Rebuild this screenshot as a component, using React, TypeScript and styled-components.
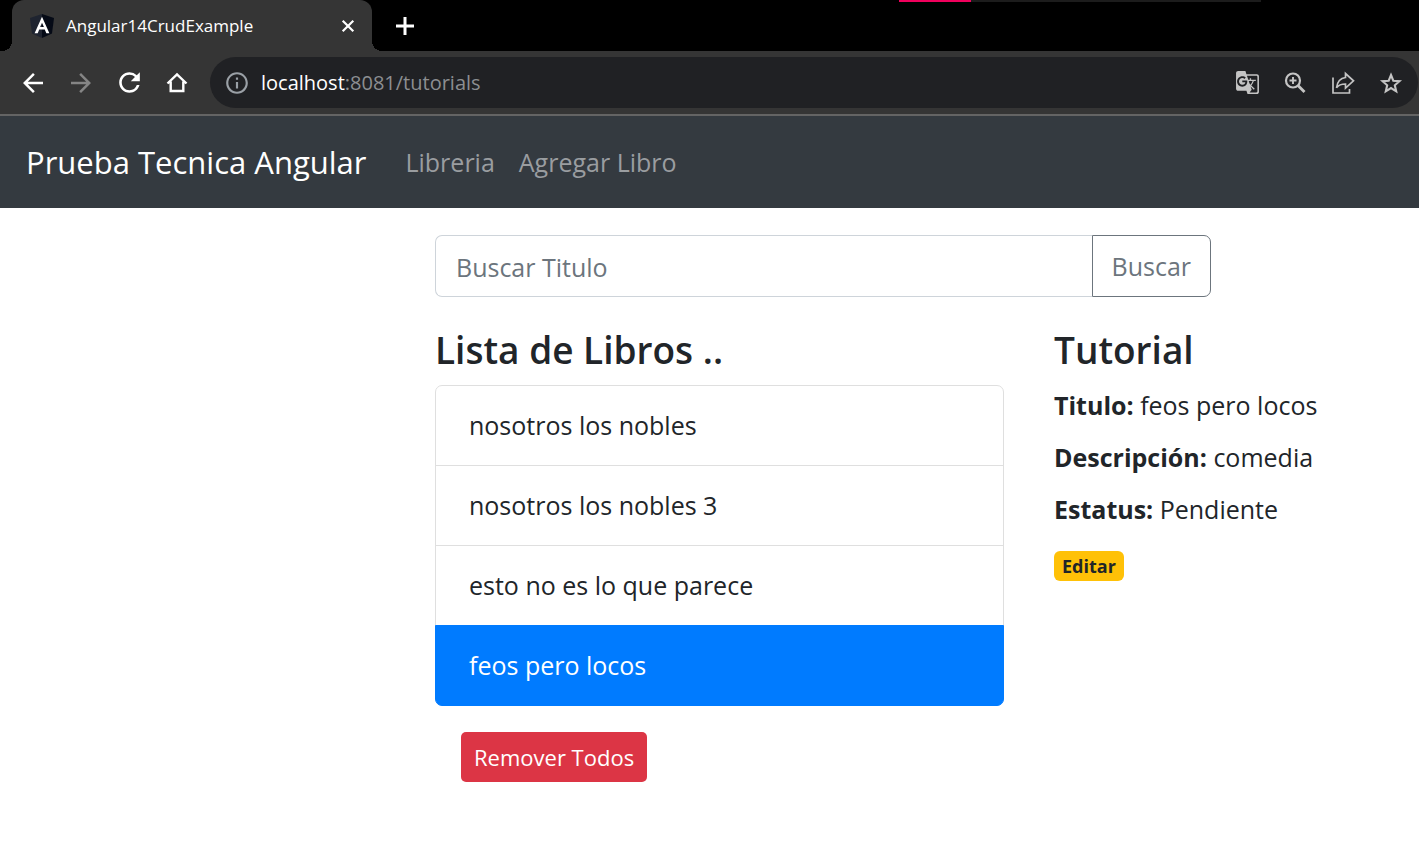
import React from "react";
import styled, { createGlobalStyle } from "styled-components";
import {
  MdArrowBack,
  MdArrowForward,
  MdGTranslate,
  MdInfoOutline,
  MdRefresh,
} from "react-icons/md";

const GlobalStyle = createGlobalStyle`
  *, *::before, *::after { box-sizing: border-box; }
  body {
    margin: 0;
    background: #fff;
    color: #212529;
    font-family: "Open Sans", "Noto Sans", sans-serif;
    font-size: 25px;
    line-height: 40px;
  }
  button, input { font: inherit; }
`;

const TabStrip = styled.div`
  position: relative;
  display: flex;
  align-items: center;
  height: 51px;
  padding-left: 12px;
  background: #000;
`;

const Tab = styled.div`
  position: relative;
  display: flex;
  align-items: center;
  gap: 12px;
  width: 360px;
  height: 51px;
  padding: 0 14px 0 18px;
  border-radius: 12px 12px 0 0;
  background: #353535;
  color: #fff;
  font-size: 17px;
  line-height: 24px;

  &::before,
  &::after {
    content: "";
    position: absolute;
    bottom: 0;
    width: 10px;
    height: 10px;
  }
  &::before {
    right: 100%;
    background: radial-gradient(circle at 0 0, transparent 10px, #353535 10px);
  }
  &::after {
    left: 100%;
    background: radial-gradient(circle at 100% 0, transparent 10px, #353535 10px);
  }
`;

const TabTitle = styled.span`
  flex: 1;
`;

const IconButton = styled.button<{ $color?: string; $size?: number }>`
  display: grid;
  flex: none;
  place-items: center;
  width: ${(p) => p.$size ?? 48}px;
  height: ${(p) => p.$size ?? 48}px;
  padding: 0;
  border: 0;
  background: none;
  color: ${(p) => p.$color ?? "#fff"};
`;

const NewTab = styled.div`
  margin-left: 9px;
`;

const LoadTrack = styled.div`
  position: absolute;
  top: 0;
  right: 158px;
  width: 362px;
  height: 2px;
  background: linear-gradient(to right, #f0005c 72px, #1c1c1c 72px);
`;

const Toolbar = styled.div`
  display: flex;
  align-items: center;
  height: 65px;
  padding: 0 1px 0 9px;
  border-bottom: 2px solid #646464;
  background: #353535;
`;

const AddressBar = styled.div`
  display: flex;
  flex: 1;
  align-items: center;
  height: 51px;
  margin-left: 9px;
  padding: 0 3px 0 14px;
  border-radius: 26px;
  background: #202124;
  color: #9aa0a6;
`;

const Address = styled.div`
  flex: 1;
  margin-left: 11px;
  color: #8c8e91;
  font-size: 20px;
  line-height: 30px;

  b {
    color: #fff;
    font-weight: 400;
  }
`;

const Navbar = styled.nav`
  display: flex;
  align-items: center;
  gap: 24px;
  height: 92px;
  padding: 0 26px;
  background: #343a40;
`;

const Brand = styled.a`
  margin-right: 15px;
  color: #fff;
  font-size: 31px;
  text-decoration: none;
`;

const NavLink = styled.a`
  color: #9a9da0;
  text-decoration: none;
`;

const Main = styled.main`
  display: grid;
  grid-template-columns: 435fr minmax(0, 984fr);
  padding-top: 27px;
`;

const Content = styled.div`
  grid-column: 2;
`;

const SearchRow = styled.form`
  display: grid;
  grid-template-columns: 776fr 208fr;
`;

const SearchGroup = styled.div`
  display: flex;
`;

const SearchInput = styled.input`
  flex: 1;
  min-width: 0;
  height: 62px;
  padding: 2px 20px 0;
  border: 1px solid #ced4da;
  border-right: 0;
  border-radius: 7px 0 0 7px;
  background: #fff;
  color: #495057;

  &::placeholder {
    color: #6c757d;
    opacity: 1;
  }
`;

const SearchButton = styled.button`
  height: 62px;
  padding: 0 19px;
  border: 1px solid #6c757d;
  border-radius: 0 7px 7px 0;
  background: #fff;
  color: #6c757d;
`;

const Columns = styled.div`
  display: grid;
  grid-template-columns: minmax(0, 569fr) minmax(0, 415fr);
  margin-top: 27px;
`;

const Heading = styled.h4`
  margin: 0 0 9px;
  font-size: 37px;
  font-weight: 600;
  line-height: 52px;
`;

const BookList = styled.ul`
  margin: 0;
  padding: 0;
  list-style: none;
`;

const Book = styled.li<{ $active?: boolean }>`
  padding: 20px 33px;
  border: 1px solid ${(p) => (p.$active ? "#007bff" : "#dfdfdf")};
  background: ${(p) => (p.$active ? "#007bff" : "#fff")};
  color: ${(p) => (p.$active ? "#fff" : "inherit")};
  line-height: 39px;

  &:first-child {
    border-top-left-radius: 7px;
    border-top-right-radius: 7px;
  }
  &:last-child {
    border-bottom-left-radius: 7px;
    border-bottom-right-radius: 7px;
  }
  & + & {
    margin-top: -1px;
  }
`;

const RemoveButton = styled.button`
  height: 50px;
  margin: 26px;
  padding: 0 13px;
  border: 0;
  border-radius: 5px;
  background: #dc3545;
  color: #fff;
  font-size: 22px;
`;

const Detail = styled.section`
  padding-left: 50px;
`;

const Field = styled.p`
  margin: 0 0 12px;
`;

const EditLink = styled.a`
  display: block;
  width: max-content;
  margin-top: 22px;
  padding: 0 8px;
  border-radius: 6px;
  background: #ffc107;
  color: #212529;
  font-size: 18px;
  font-weight: 700;
  line-height: 30px;
  text-decoration: none;
`;

const AngularLogo = () => (
  <svg width="24" height="24" viewBox="0 0 24 24" aria-hidden="true">
    <path d="M12 0 0 4l2 15.500L12 24z" fill="#1f2430" />
    <path d="m12 0 12 4-2 15.500L12 24z" fill="#050a16" />
    <path
      d="M12 2.800 4.600 19.200h3.100l1.500-3.700h5.600l1.500 3.700h3.100zm0 6 1.900 4.300h-3.800z"
      fill="#fff"
    />
  </svg>
);

const CloseIcon = () => (
  <svg width="20" height="20" viewBox="0 0 20 20" fill="none" stroke="currentColor" aria-hidden="true">
    <path d="m4.700 4.700 10.600 10.600M15.300 4.700 4.700 15.300" strokeWidth="2.200" />
  </svg>
);

const PlusIcon = () => (
  <svg width="18" height="18" viewBox="0 0 18 18" fill="none" stroke="currentColor" aria-hidden="true">
    <path d="M9 0v18M0 9h18" strokeWidth="3" />
  </svg>
);

const HomeIcon = () => (
  <svg width="22" height="22" viewBox="0 0 22 22" fill="none" stroke="currentColor" aria-hidden="true">
    <path d="M1.500 11.500 11 2.300l9.500 9.200M4.700 9.500V19h12.600V9.500" strokeWidth="2.400" />
  </svg>
);

const ZoomIcon = () => (
  <svg width="24" height="24" viewBox="0 0 24 24" fill="none" stroke="currentColor" aria-hidden="true">
    <circle cx="10" cy="9.500" r="7" strokeWidth="2.200" />
    <path d="M10 6v7M6.500 9.500h7" strokeWidth="1.900" />
    <path d="m15 14.500 6.500 6.500" strokeWidth="2.900" />
  </svg>
);

const ShareIcon = () => (
  <svg width="24" height="24" viewBox="0 0 24 24" fill="none" stroke="currentColor" aria-hidden="true">
    <path d="M2 6.500v15.500h16.500V18" strokeWidth="1.700" />
    <path d="M14.500 6.500V2.500l8 7.300-8 7.300V13c-4 0-6.800.8-9 3.800.7-5.300 3.800-9.700 9-10.300z" strokeWidth="1.700" />
  </svg>
);

const StarIcon = () => (
  <svg width="24" height="24" viewBox="0 0 24 24" fill="none" stroke="currentColor" aria-hidden="true">
    <path
      d="m12 4 2.300 5.700 6.200.5-4.700 4.100 1.400 6-5.200-3.200-5.200 3.200 1.400-6-4.700-4.100 6.200-.5z"
      strokeWidth="2.100"
    />
  </svg>
);

const books = ["nosotros los nobles", "nosotros los nobles 3", "esto no es lo que parece", "feos pero locos"];
const selected = 3;

export default function App() {
  return (
    <>
      <GlobalStyle />
      <TabStrip>
        <Tab>
          <AngularLogo />
          <TabTitle>Angular14CrudExample</TabTitle>
          <IconButton $size={20} aria-label="Close tab"><CloseIcon /></IconButton>
        </Tab>
        <NewTab>
          <IconButton aria-label="New tab"><PlusIcon /></IconButton>
        </NewTab>
        <LoadTrack />
      </TabStrip>
      <Toolbar>
        <IconButton aria-label="Back"><MdArrowBack size={30} /></IconButton>
        <IconButton $color="#858585" aria-label="Forward"><MdArrowForward size={30} /></IconButton>
        <IconButton aria-label="Reload"><MdRefresh size={31} /></IconButton>
        <IconButton aria-label="Home"><HomeIcon /></IconButton>
        <AddressBar>
          <MdInfoOutline size={26} />
          <Address><b>localhost</b>:8081/tutorials</Address>
          <IconButton $color="#c4c4c4" aria-label="Translate"><MdGTranslate size={25} /></IconButton>
          <IconButton $color="#c4c4c4" aria-label="Zoom"><ZoomIcon /></IconButton>
          <IconButton $color="#c4c4c4" aria-label="Share"><ShareIcon /></IconButton>
          <IconButton $color="#c4c4c4" aria-label="Bookmark"><StarIcon /></IconButton>
        </AddressBar>
      </Toolbar>
      <Navbar>
        <Brand href="#">Prueba Tecnica Angular</Brand>
        <NavLink href="#tutorials">Libreria</NavLink>
        <NavLink href="#add">Agregar Libro</NavLink>
      </Navbar>
      <Main>
        <Content>
          <SearchRow>
            <SearchGroup>
              <SearchInput type="text" placeholder="Buscar Titulo" aria-label="Buscar Titulo" />
              <SearchButton type="button">Buscar</SearchButton>
            </SearchGroup>
          </SearchRow>
          <Columns>
            <section>
              <Heading>Lista de Libros ..</Heading>
              <BookList>
                {books.map((title, i) => (
                  <Book key={title} $active={i === selected}>{title}</Book>
                ))}
              </BookList>
              <RemoveButton type="button">Remover Todos</RemoveButton>
            </section>
            <Detail>
              <Heading>Tutorial</Heading>
              <Field><strong>Titulo:</strong> feos pero locos</Field>
              <Field><strong>Descripción:</strong> comedia</Field>
              <Field><strong>Estatus:</strong> Pendiente</Field>
              <EditLink href="#edit">Editar</EditLink>
            </Detail>
          </Columns>
        </Content>
      </Main>
    </>
  );
}
